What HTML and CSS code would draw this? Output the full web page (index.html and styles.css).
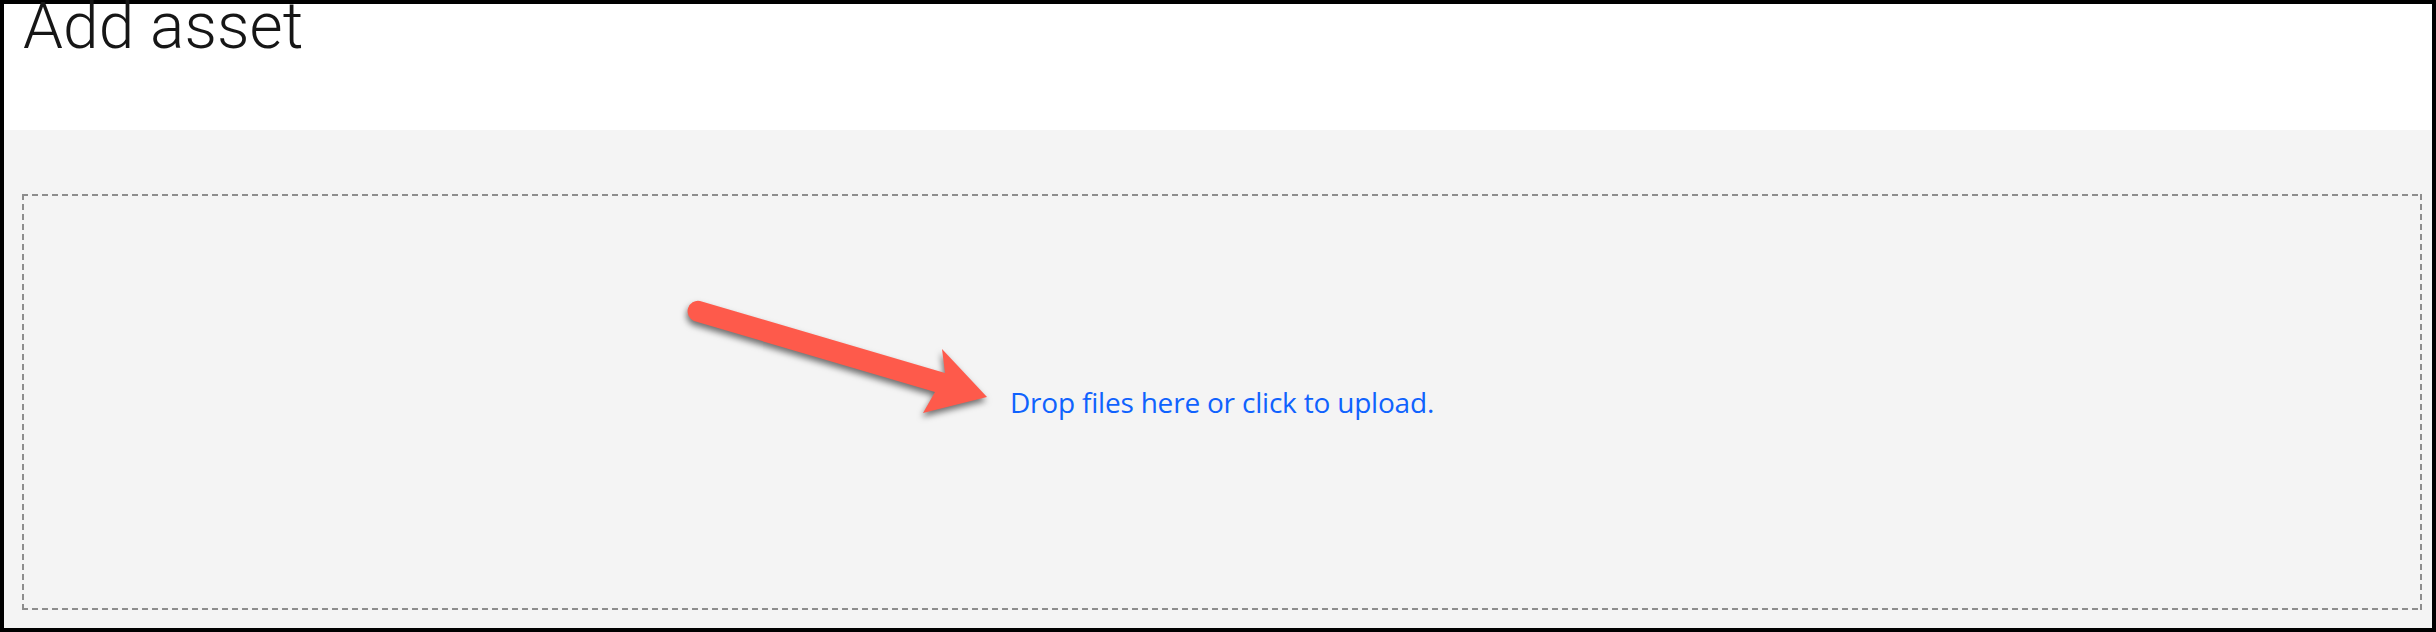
FILE: index.html
```html
<!DOCTYPE html>
<html lang="en">
<head>
<meta charset="utf-8">
<title>Add asset</title>
<link rel="stylesheet" href="styles.css">
</head>
<body>
<div class="frame">
  <header class="header">
    <h1 class="title">Add asset</h1>
  </header>
  <main class="content">
    <div class="dropzone">
      <span class="drop-label">Drop files here or click to upload.</span>
    </div>
  </main>
  <svg class="annotation" width="2436" height="632" viewBox="0 0 2436 632" aria-hidden="true">
    <path d="M700 301 L945 373 L942 349 L987 397 L923 413 L935 392 L694 321 A10.5 10.5 0 0 1 700 301 Z" fill="#fe5a4b"/>
  </svg>
</div>
</body>
</html>
```

FILE: styles.css
```css
html, body {
  margin: 0;
  padding: 0;
}
body {
  width: 2436px;
  height: 632px;
  overflow: hidden;
  font-family: "Open Sans", "Liberation Sans", sans-serif;
}
.frame {
  position: relative;
  box-sizing: border-box;
  width: 2436px;
  height: 632px;
  border: 4px solid #000;
  display: flex;
  flex-direction: column;
  background: #fff;
}
.header {
  height: 126px;
  flex: none;
  background: #fff;
}
.title {
  margin: 0;
  padding-left: 19px;
  font-family: Roboto, "Open Sans", sans-serif;
  font-size: 64px;
  font-weight: 300;
  line-height: 46px;
  color: #161616;
  letter-spacing: 0.1px;
}
.content {
  flex: 1;
  background: #f4f4f4;
  padding: 64px 10px 18px 18px;
  display: flex;
}
.dropzone {
  flex: 1;
  display: flex;
  align-items: center;
  justify-content: center;
  background:
    repeating-linear-gradient(90deg, #8d8d8d 0 6px, transparent 6px 10px) top left / 100% 2px no-repeat,
    repeating-linear-gradient(90deg, #8d8d8d 0 6px, transparent 6px 10px) bottom left / 100% 2px no-repeat,
    repeating-linear-gradient(180deg, #8d8d8d 0 6px, transparent 6px 10px) top left / 2px 100% no-repeat,
    repeating-linear-gradient(180deg, #8d8d8d 0 6px, transparent 6px 10px) top right / 2px 100% no-repeat;
}
.drop-label {
  font-size: 28px;
  color: #0f62fe;
  line-height: 1;
  letter-spacing: -0.2px;
}
.annotation {
  position: absolute;
  left: -4px;
  top: -4px;
  pointer-events: none;
  filter: drop-shadow(-1px 4px 3px rgba(0, 0, 0, 0.55));
}
```
